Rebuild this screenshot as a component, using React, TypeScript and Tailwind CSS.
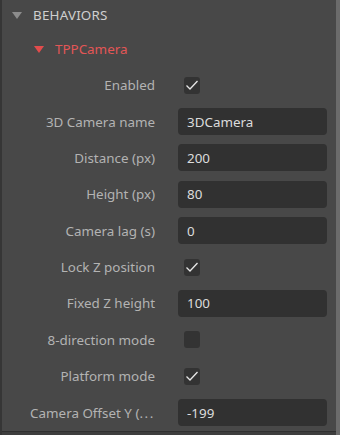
import React from "react";

type Row =
  | { label: string; kind: "check"; checked: boolean }
  | { label: string; kind: "text"; value: string };

const rows: Row[] = [
  { label: "Enabled", kind: "check", checked: true },
  { label: "3D Camera name", kind: "text", value: "3DCamera" },
  { label: "Distance (px)", kind: "text", value: "200" },
  { label: "Height (px)", kind: "text", value: "80" },
  { label: "Camera lag (s)", kind: "text", value: "0" },
  { label: "Lock Z position", kind: "check", checked: true },
  { label: "Fixed Z height", kind: "text", value: "100" },
  { label: "8-direction mode", kind: "check", checked: false },
  { label: "Platform mode", kind: "check", checked: true },
  { label: "Camera Offset Y (", kind: "text", value: "-199" },
];

function Caret({ color }: { color: string }) {
  return (
    <svg width="10" height="7" viewBox="0 0 10 7" className="shrink-0">
      <path d="M0 0 H10 L5 7 Z" fill={color} />
    </svg>
  );
}

function Checkbox({ checked }: { checked: boolean }) {
  return (
    <div className="ml-[6px] flex h-[17px] w-[16px] items-center justify-center rounded-[3px] bg-[#333333]">
      {checked && (
        <svg width="16" height="16" viewBox="0 0 16 16" fill="none">
          <path d="M2.5 8.5 L6 12 L13.5 4" stroke="#e6e6e6" strokeWidth="1.3" />
        </svg>
      )}
    </div>
  );
}

export default function App() {
  return (
    <div className="flex h-[435px] w-[340px] overflow-hidden bg-[#484848] font-['Noto_Sans',sans-serif] text-[13.4px]">
      <div className="w-[2px] shrink-0 bg-[#363636]" />
      <div className="flex flex-1 flex-col">
        {/* section header */}
        <div className="flex h-[30px] items-center gap-[11px] pl-[10px] text-[#cfcfcf]">
          <Caret color="#8c8c8c" />
          <span className="tracking-[0.2px]">BEHAVIORS</span>
        </div>

        {/* behavior name */}
        <div className="flex h-[37px] items-center gap-[11px] pl-[32px] pt-[2px] text-[#e35656]">
          <Caret color="#e24c4c" />
          <span>TPPCamera</span>
        </div>

        {/* properties */}
        <div className="flex flex-col">
          {rows.map((r, i) => (
            <div key={r.label} className="flex h-[36.4px] items-center">
              <div className="w-[153px] shrink-0 whitespace-nowrap text-right text-[#b3b3b3]">
                {r.label}
                {i === rows.length - 1 && <span className="tracking-[1.6px]">...</span>}
              </div>
              <div className="ml-[23px] w-[149px]">
                {r.kind === "check" ? (
                  <Checkbox checked={r.checked} />
                ) : (
                  <div className="flex h-[27px] items-center rounded-[4px] bg-[#313131] pl-[9px] text-[#dcdcdc]">
                    {r.value}
                  </div>
                )}
              </div>
            </div>
          ))}
        </div>

        <div className="mt-auto h-[4px] border-t border-[#303030] bg-[#3e3e3e]" />
      </div>
      <div className="w-[4px] shrink-0 bg-[#6b6b6b]" />
    </div>
  );
}
